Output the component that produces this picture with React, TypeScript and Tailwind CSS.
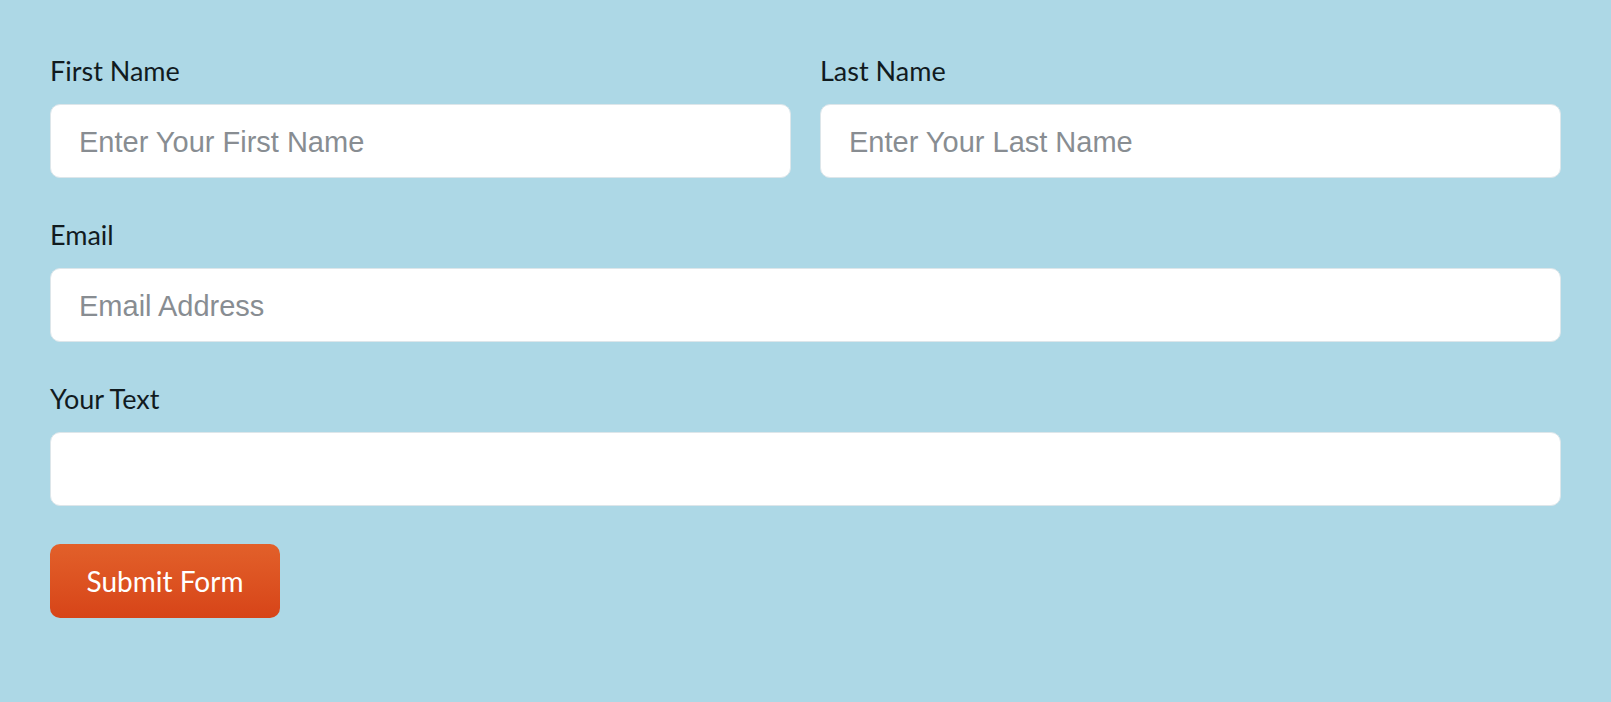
const labelCls = "block text-[27px] leading-[30px] text-[#111b1f] mb-[18px] font-['Lato',sans-serif]";
const inputCls =
  "w-full h-[74px] rounded-[10px] bg-white border border-[#dde6ea] px-[28px] pt-[3px] text-[29px] text-[#333] placeholder:text-[#888d92] font-['Liberation_Sans',Arial,sans-serif] outline-none";

const Field = ({ label, placeholder }: { label: string; placeholder?: string }) => (
  <div className="flex-1">
    <label className={labelCls}>{label}</label>
    <input type="text" className={inputCls} placeholder={placeholder} />
  </div>
);

const App = () => {
  return (
    <div className="min-h-screen w-full bg-[#add8e6] px-[50px] pt-[56px] pb-[85px]">
      <form className="flex flex-col" onSubmit={(e) => e.preventDefault()}>
        <div className="flex gap-[29px] mb-[42px]">
          <Field label="First Name" placeholder="Enter Your First Name" />
          <Field label="Last Name" placeholder="Enter Your Last Name" />
        </div>
        <div className="mb-[42px]">
          <Field label="Email" placeholder="Email Address" />
        </div>
        <div className="mb-[38px]">
          <Field label="Your Text" />
        </div>
        <div>
          <button
            type="submit"
            className="w-[230px] h-[74px] rounded-[10px] bg-gradient-to-b from-[#e2602a] to-[#d74418] text-white text-[28px] font-['Lato',sans-serif]"
          >
            Submit Form
          </button>
        </div>
      </form>
    </div>
  );
};

export default App;
